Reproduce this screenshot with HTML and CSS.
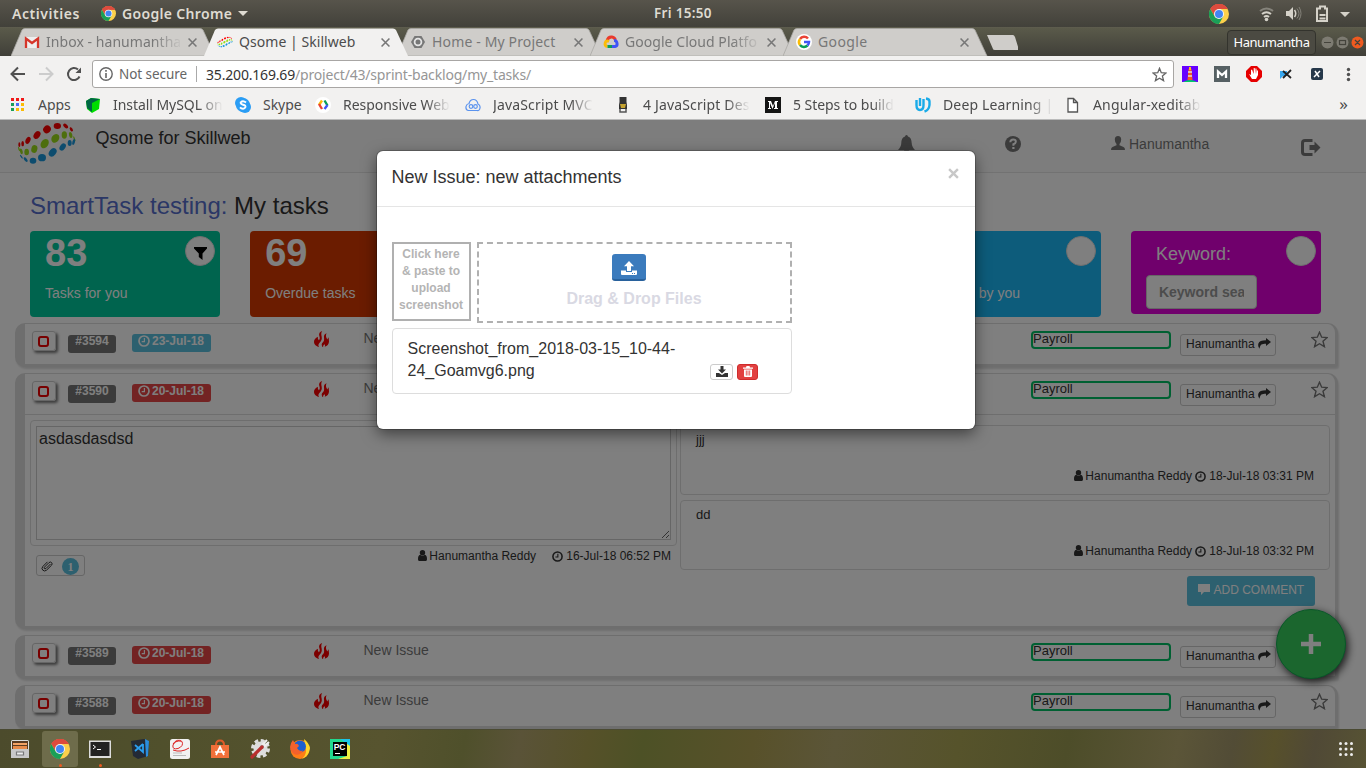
FILE: index.html
```html
<!DOCTYPE html>
<html lang="en">
<head>
<meta charset="utf-8">
<title>Qsome | Skillweb</title>
<link rel="stylesheet" href="styles.css">
</head>
<body>
<svg class="defs" width="0" height="0">
  <symbol id="chrome" viewBox="0 0 20 20">
    <circle cx="10" cy="10" r="10" fill="#fcd04b"/>
    <path d="M10 10 1.3 5A10 10 0 0 1 18.7 5H10z" fill="#dd4b3e"/>
    <path d="M10 5h8.7A10 10 0 0 0 1.3 5L5.7 12.5z" fill="#dd4b3e"/>
    <path d="M1.3 5A10 10 0 0 0 10 20l4.3-7.5L10 10 5.7 12.500z" fill="#1a9f58"/>
    <circle cx="10" cy="10" r="5" fill="#f4f4f4"/><circle cx="10" cy="10" r="4" fill="#4285f4"/>
  </symbol>
  <symbol id="tab" viewBox="0 0 206 28"><path d="M0 28 11 2Q12 .5 14 .5H189Q191 .5 192 2L204 28z"/></symbol>
  <symbol id="close" viewBox="0 0 8 8"><path d="M.5.5l7 7m0-7l-7 7" stroke="#777" stroke-width="1.4"/></symbol>
  <symbol id="logo" viewBox="50 10 180 130">
    <g fill="#f00"><ellipse cx="57" cy="80" rx="3" ry="7"/><ellipse cx="67" cy="77" rx="4" ry="8"/><ellipse cx="83" cy="67" rx="7" ry="11" transform="rotate(25 83 67)"/><ellipse cx="110" cy="51" rx="9" ry="13" transform="rotate(35 110 51)"/><ellipse cx="140" cy="34" rx="11" ry="12" transform="rotate(45 140 34)"/><ellipse cx="171" cy="24" rx="11" ry="9"/><ellipse cx="196" cy="24" rx="9" ry="5" transform="rotate(45 196 24)"/><ellipse cx="213" cy="34" rx="7" ry="4" transform="rotate(60 213 34)"/></g>
    <g fill="#9add1b"><ellipse cx="56" cy="93" rx="2" ry="7" transform="rotate(-20 56 93)"/><ellipse cx="63" cy="100" rx="4" ry="9" transform="rotate(-15 63 100)"/><ellipse cx="79" cy="102" rx="7" ry="10"/><ellipse cx="102" cy="93" rx="9" ry="12" transform="rotate(15 102 93)"/><ellipse cx="133" cy="77" rx="11" ry="15" transform="rotate(35 133 77)"/><ellipse cx="165" cy="61" rx="11" ry="14" transform="rotate(35 165 61)"/><ellipse cx="192" cy="51" rx="8" ry="11"/><ellipse cx="211" cy="51" rx="5" ry="9" transform="rotate(-15 211 51)"/><ellipse cx="222" cy="62" rx="2" ry="8" transform="rotate(-20 222 62)"/></g>
    <g fill="#1b98dd"><ellipse cx="63" cy="116" rx="2" ry="7" transform="rotate(-35 63 116)"/><ellipse cx="76" cy="125" rx="4" ry="8" transform="rotate(-40 76 125)"/><ellipse cx="98" cy="128" rx="10" ry="9"/><ellipse cx="125" cy="119" rx="12" ry="11"/><ellipse cx="157" cy="103" rx="10" ry="14" transform="rotate(40 157 103)"/><ellipse cx="187" cy="87" rx="8" ry="12" transform="rotate(35 187 87)"/><ellipse cx="208" cy="75" rx="6" ry="9"/><ellipse cx="220" cy="72" rx="4" ry="9" transform="rotate(15 220 72)"/></g>
  </symbol>
  <symbol id="flame" viewBox="0 0 15 16"><path d="M8.200 0C5.800.8 4.600 2.600 5.200 4.600 5.900 6.800 6.200 8.300 4.900 9.200 4.100 8.500 3.600 7.500 4 5.800 1.300 6.800 0 8.800 0 10.800c0 2.700 2.400 4.700 5 5.100-.9-1.300-.8-2.600.4-3.900C7.400 9.900 8.300 8.300 7.600 5.300 7.200 3.400 7 1.600 8.200 0z"/><path d="M12.600 2.300C10.300 3.200 9.700 4.600 10 6.600c.3 2.300.1 3.900-1.300 5-1.100.9-1.400 2.300-.4 4.100.3.300.5.300.8.300 0-1.200.5-2.200 1.600-2.700.5.800.5 1.600 0 2.500 2.500-.6 4.300-2.500 4.300-5.200 0-1.900-.4-3.200-.4-4.400-.5.500-1 1.200-1.100 2.200C11.800 6.600 11.500 4.200 12.600 2.300z"/></symbol>
  <symbol id="clock" viewBox="0 0 12 12"><circle cx="6" cy="6" r="5" fill="none" stroke="currentColor" stroke-width="1.700"/><path d="M6.400 3v3.600H3.700" fill="none" stroke="currentColor" stroke-width="1.200"/></symbol>
  <symbol id="user" viewBox="0 0 9 11"><circle cx="4.500" cy="2.700" r="2.700"/><path d="M2.200 4.700C.5 5 0 6.700 0 9.200 0 10.500.8 11 1.800 11h5.400C8.200 11 9 10.500 9 9.200 9 6.700 8.500 5 6.800 4.700a3.300 3.300 0 0 1-4.600 0z"/></symbol>
  <symbol id="share" viewBox="0 0 13 11"><path d="M8 0l5 4-5 4V5.700C4 5.700 2 6.300 1.600 10.800 0 9 0 6.900.4 5.600 1.200 3.200 3.600 2.300 8 2.300z"/></symbol>
  <symbol id="star" viewBox="0 0 17 17"><path d="M8.500 1.200l2.200 5 5.500.4-4.200 3.600 1.400 5.500-4.900-3-4.900 3L5 10.200.8 6.600l5.500-.4z" fill="none" stroke="#777" stroke-width="1.400"/></symbol>
</svg>

<header class="topbar">
  <span class="activities">Activities</span>
  <svg class="i15"><use href="#chrome"/></svg>
  <span class="appname">Google Chrome</span><i class="caret"></i>
  <span class="clock">Fri 15:50</span>
  <svg class="i20 tray-chrome"><use href="#chrome"/></svg>
  <svg class="tray" width="92" height="18" viewBox="0 0 92 18" fill="none" stroke="#d5d2c9">
    <path d="M1 6q6.500-5 13 0" stroke="#85837b" stroke-width="2"/><path d="M3 9q4.500-3.500 9 0M5 12q2.500-2 5 0" stroke-width="2"/><circle cx="7.500" cy="14.500" r="1.800" fill="#d5d2c9" stroke="none"/>
    <path d="M27 6h3l4-4v13l-4-4h-3z" fill="#d5d2c9" stroke="none"/><path d="M35.500 5q2.500 3.500 0 7" stroke-width="1.500"/><path d="M38 3.500q4 5 0 10M40 2q4 6.500 0 13" stroke="#85837b"/>
    <path d="M59 3.500h2v-2h5v2h2V16h-10V3.500zM60.500 13.500h6M60.500 10h6" stroke-width="2"/>
    <path d="M81 7h10l-5 5z" fill="#d5d2c9" stroke="none"/>
  </svg>
</header>

<nav class="tabstrip">
  <div class="tab"><svg class="shape"><use href="#tab"/></svg>
    <svg class="fav" viewBox="0 0 16 16"><path d="M1 3h14v11H1z" fill="#eee"/><path d="M2 14V4.500L8 9l6-4.500V14" fill="none" stroke="#d5362b" stroke-width="2.300"/></svg>
    <span class="ttl faded">Inbox - hanumantha</span><svg class="x"><use href="#close"/></svg></div>
  <div class="tab active"><svg class="shape"><use href="#tab"/></svg>
    <svg class="fav" viewBox="50 10 180 130"><use href="#logo" x="50" y="10" width="180" height="130"/></svg>
    <span class="ttl t-q">Qsome | Skillweb</span><svg class="x"><use href="#close"/></svg></div>
  <div class="tab"><svg class="shape"><use href="#tab"/></svg>
    <svg class="fav" viewBox="0 0 16 16"><path d="M4.500 2h7L15 8l-3.500 6h-7L1 8z" fill="#777"/><circle cx="8" cy="8" r="3.400" fill="#777" stroke="#e4e4e4" stroke-width="1.800"/></svg>
    <span class="ttl t-h">Home - My Project</span><svg class="x"><use href="#close"/></svg></div>
  <div class="tab"><svg class="shape"><use href="#tab"/></svg>
    <svg class="fav" viewBox="0 0 16 16" fill="none" stroke-width="3"><path d="M4 7q1-4.500 5-4 2.500.3 3.500 3" stroke="#ea3a2d"/><path d="M4.500 12.500Q1.500 12 2.200 9T6 7.500" stroke="#fbbc05"/><path d="M4.500 12.500H9" stroke="#0a9d58"/><path d="M9 12.500h3q2.500-.5 2-3.300T11 6.500" stroke="#4055f5"/></svg>
    <span class="ttl faded t-c">Google Cloud Platfo</span><svg class="x"><use href="#close"/></svg></div>
  <div class="tab"><svg class="shape"><use href="#tab"/></svg>
    <svg class="fav" viewBox="0 0 16 16" fill="none" stroke-width="2.500"><circle cx="8" cy="8" r="8" fill="#fff"/><path d="M12 4.500A5 5 0 0 0 4 5" stroke="#ea4335"/><path d="M4 5a5 5 0 0 0 0 6" stroke="#fbbc05"/><path d="M4 11a5 5 0 0 0 7.500.5" stroke="#0a9d58"/><path d="M11.500 11.500A5 5 0 0 0 13 8H8" stroke="#4055f5"/></svg>
    <span class="ttl t-g">Google</span><svg class="x"><use href="#close"/></svg></div>
  <svg class="newtab" width="32" height="15"><path d="M1 0h26q1 0 2 2l4 13H9q-2 0-2-1z" fill="#cfcdca"/></svg>
  <span class="profile">Hanumantha</span>
  <svg class="winbtns" width="43" height="13" viewBox="0 0 43 13"><circle cx="6.500" cy="6.500" r="6" fill="#7d7b72"/><circle cx="21.500" cy="6.500" r="6" fill="#7d7b72"/><circle cx="36.500" cy="6.500" r="6" fill="#ee5a20"/><g stroke="#44433c" fill="none" stroke-width="1.200"><path d="M3 6.500h7M34 4l5 5m0-5l-5 5"/><rect x="18.500" y="4.500" width="6" height="4"/></g></svg>
</nav>

<div class="toolbar">
  <svg width="72" height="16" viewBox="0 0 72 16" fill="none" stroke="#505050" stroke-width="2"><path d="M15 8H2M8 1.500L1.500 8 8 14.500"/><path d="M29 8h12.500M36 1.500L42.500 8 36 14.500" stroke="#ccc"/><path d="M69.500 10.500A6 6 0 1 1 68 3.600"/><path d="M65.500 7H71V1.500z" fill="#505050" stroke="none"/></svg>
  <div class="omnibox">
    <svg width="14" height="14" viewBox="0 0 14 14"><circle cx="7" cy="7" r="6.200" fill="none" stroke="#666" stroke-width="1.400"/><path d="M7 6v5M7 3v1.700" stroke="#666" stroke-width="1.600"/></svg>
    <span class="notsec">Not secure</span><span class="url"><b>35.200.169.69</b>/project/43/sprint-backlog/my_tasks/</span>
    <svg class="bm" width="15" height="15" viewBox="0 0 17 17"><path d="M8.500 1.500l2 4.900 5.400.4-4.100 3.500 1.300 5.200-4.600-2.800-4.600 2.800 1.300-5.200L1.100 6.800l5.400-.4z" fill="none" stroke="#666" stroke-width="1.500"/></svg>
  </div>
  <svg class="exts" width="172" height="16" viewBox="0 0 172 16">
    <path d="M0 0h16v16H0z" fill="#60f"/><path d="M6.500 3h3l1 11h-5z" fill="#f55522"/><path d="M6 6h4M6 10h4" stroke="#ddd" stroke-width="1.500"/><path d="M7 1h2v3H7z" fill="#fb2"/><path d="M1 16q7-4 14 0z" fill="#0c6"/>
    <path d="M32 0h16v16H32z" fill="#566063"/><path d="M36 12V5.500l4 3.500 4-3.500V12" stroke="#fff" stroke-width="2.300" fill="none"/>
    <path d="M69 0h6l5 5v6l-5 5h-6l-5-5V5z" fill="#e60000"/><path d="M69 4v5l-2-1 3 5h4l2-4V4.500h-1V8l-.6-5.500h-1V8l-.7-6h-1v6L70 3.500z" fill="#fff"/>
    <path d="M98 5h7v5h-4l-3 3z" fill="#38a8f0"/><path d="M101 5l8 7m-8 0l8-8" stroke="#222" stroke-width="1.800"/>
    <rect x="129" y="2" width="12" height="12" rx="2" fill="#26384a"/><path d="M133 5l4 6m1-6l-6 6" stroke="#fff" stroke-width="1.500"/>
    <g fill="#505050"><circle cx="166.500" cy="3.500" r="1.700"/><circle cx="166.500" cy="8.500" r="1.700"/><circle cx="166.500" cy="13.500" r="1.700"/></g>
  </svg>
</div>

<div class="bookmarks">
  <div class="bk" style="width:75px"><svg viewBox="0 0 16 16"><path d="M1 1h3v3H1zm5 0h3v3H6zm5 0h3v3h-3z" fill="#f01818"/><path d="M1 6h3v3H1z" fill="#1a9f58"/><path d="M6 6h3v3H6z" fill="#4c6cf5"/><path d="M11 6h3v3h-3zM6 11h3v3H6zm5 0h3v3h-3z" fill="#fbbc05"/><path d="M1 11h3v3H1z" fill="#1a9f58"/></svg><span>Apps</span></div>
  <div class="bk" style="width:150px"><svg viewBox="0 0 16 16"><path d="M1 4l5-3 9 1-1 10-7 4-5-4z" fill="#00de00"/><path d="M1 4l5-3 9 1-8 4zM1 4l6 2v9l-5-4z" fill="#064"/></svg><span class="faded">Install MySQL on</span></div>
  <div class="bk" style="width:80px"><svg viewBox="0 0 16 16"><rect width="12" height="12" rx="6" fill="#2b9df4"/><rect x="4" y="4" width="12" height="12" rx="6" fill="#2b9df4"/><circle cx="8" cy="8" r="7" fill="#2b9df4"/><path d="M11 5.500Q8 3 5.700 5.300C5 8.500 11 7 10.500 10 9.500 12.500 6.500 12 5 10.300" fill="none" stroke="#fff" stroke-width="1.900"/></svg><span>Skype</span></div>
  <div class="bk" style="width:150px"><svg viewBox="0 0 16 16" fill="none" stroke-width="2.400"><circle cx="8" cy="8" r="8" fill="#fff"/><path d="M7 3.500L4 8" stroke="#fbbc05"/><path d="M4 7l3 5" stroke="#ea4335"/><path d="M9.500 3.500l3 5" stroke="#0a9d58"/><path d="M12.500 8l-3 4" stroke="#4055f5"/></svg><span class="faded">Responsive Web</span></div>
  <div class="bk" style="width:150px"><svg viewBox="0 0 16 16" fill="none" stroke="#5b93ee" stroke-width="1.200"><path d="M3.500 13.500Q.5 13 1 9.500 1.500 7 4 6.500 5 2.500 8.500 2.500t4.500 4.500Q15.500 8 15 11t-3 2.500z"/><circle cx="6" cy="9.500" r="1.800"/><circle cx="10.500" cy="9.500" r="1.800"/></svg><span class="faded wide">JavaScript MVC</span></div>
  <div class="bk" style="width:150px"><svg viewBox="0 0 16 16"><path d="M4.500 0h7v5l.5 3v4H4V8l.5-3z" fill="#333"/><path d="M5 7h6l-1 4H6z" fill="#c4a230"/><path d="M5 12v3h6v-3" fill="none" stroke="#555" stroke-width="1.500"/></svg><span class="faded wide">4 JavaScript Des</span></div>
  <div class="bk" style="width:150px"><svg viewBox="0 0 16 16"><path d="M0 0h16v16H0z" fill="#151515"/><path d="M3 4h3l2 5 2-5h3v1h-1v6h1v1H9v-1h1V6l-2.500 6L5 6v5h1v1H3v-1h1V5H3z" fill="#fff"/></svg><span class="faded">5 Steps to build</span></div>
  <div class="bk" style="width:150px"><svg viewBox="0 0 16 16" fill="none" stroke="#1aabe8" stroke-width="2.400"><path d="M1.500 3v5q0 5 3.500 5t3.500-5V2"/><path d="M11 1.500q3.500.5 3.500 3V8q-.5 5-5 6.500"/><path d="M5 1v8"/></svg><span class="faded wide">Deep Learning |</span></div>
  <div class="bk bk-last"><svg viewBox="0 0 16 16"><path d="M3 1.500h5.500l4 4V15H3zM8.500 1.500v4h4" fill="#fff" stroke="#555" stroke-width="1.300"/></svg><span class="faded wide">Angular-xeditab</span></div>
  <span class="more">»</span>
</div>

<main class="page">
  <div class="navbar">
    <svg class="logo"><use href="#logo"/></svg>
    <span class="brand">Qsome for Skillweb</span>
    <svg class="bell" width="17" height="18" viewBox="0 0 17 18"><path d="M8.500 0q1.300 0 1.500 1.500C13 2.500 13.500 5 13.700 8c.1 3 1.300 4.800 3.300 7H0c2-2.200 3.200-4 3.300-7C3.500 5 4 2.500 7 1.500 7.200 0 8.500 0 8.500 0zM6 15.500h5q-.5 2.500-2.500 2.500T6 15.500z"/></svg>
    <svg class="help" width="16" height="16" viewBox="0 0 16 16"><circle cx="8" cy="8" r="8"/><path d="M5.300 6.200Q5.500 3.500 8.200 3.500t2.600 2.300Q10.500 7.500 8.400 8.200V9.700" fill="none" stroke="#fff" stroke-width="2"/><path d="M7.300 11h2.200v2H7.300z" fill="#fff"/></svg>
    <svg class="person" width="14" height="14" viewBox="0 0 14 14"><path d="M7 0q3.200 0 3.200 3.500 0 3-1.700 4.500v1.200Q10 10 12.500 11q1.500.6 1.500 3H0q0-2.400 1.500-3Q4 10 5.500 9.200V8Q3.800 6.500 3.800 3.500 3.800 0 7 0z"/></svg>
    <span class="username">Hanumantha</span>
    <svg class="exit" width="20" height="17" viewBox="0 0 20 17"><path d="M11.500 1.500H4Q1.500 1.500 1.500 4v9q0 2.500 2.500 2.500h7.500" fill="none" stroke="#777" stroke-width="3"/><path d="M8.500 6h5V2.500l6 6-6 6V11h-5z"/></svg>
  </div>
  <h1 class="heading"><span>SmartTask testing:</span> My tasks</h1>
  <div class="cards">
    <div class="card c1"><b>83</b><span>Tasks for you</span><i class="dot"><svg width="13" height="13" viewBox="0 0 13 13"><path d="M0 0h13v1.500L8.500 6.500V13L4.800 10V6.500L0 1.500z"/></svg></i></div>
    <div class="card c2"><b>69</b><span>Overdue tasks</span></div>
    <div class="card c3"></div>
    <div class="card c4"></div>
    <div class="card c5"><span>by you</span><i class="dot"></i></div>
    <div class="card c6"><label>Keyword:</label><input placeholder="Keyword search"><i class="dot"></i></div>
  </div>
  <section class="rows">
    <article class="row"><div class="line">
      <i class="check"></i><span class="tag">#3594</span><span class="tag date info"><svg><use href="#clock"/></svg>23-Jul-18</span><svg class="flame"><use href="#flame"/></svg><span class="name">Ne</span><span class="epic">Payroll</span><span class="who">Hanumantha <svg><use href="#share"/></svg></span><svg class="star"><use href="#star"/></svg>
    </div></article>
    <article class="row open"><div class="line">
      <i class="check"></i><span class="tag">#3590</span><span class="tag date"><svg><use href="#clock"/></svg>20-Jul-18</span><svg class="flame"><use href="#flame"/></svg><span class="name">Ne</span><span class="epic">Payroll</span><span class="who">Hanumantha <svg><use href="#share"/></svg></span><svg class="star"><use href="#star"/></svg>
    </div>
    <div class="detail">
      <div class="desc">
        <div class="editor"><textarea>asdasdasdsd</textarea></div>
        <div class="descfoot">
          <span class="attach"><svg width="12" height="12" viewBox="0 0 12 12" fill="none" stroke="#333" stroke-width="1"><path d="M9.500 4L5 8.500Q3.800 9.200 3.300 8.500T3.600 7L8 2.600q1.500-1.200 2.600 0t0 2.600L5.500 10.200q-2 1.600-3.700 0t0-3.700L6.500 1.800"/></svg><i>1</i></span>
          <span class="meta"><svg class="u"><use href="#user"/></svg> Hanumantha Reddy <svg class="k gap"><use href="#clock"/></svg> 16-Jul-18 06:52 PM</span>
        </div>
      </div>
      <div class="comments">
        <div class="comment"><p>jjj</p><span class="meta"><svg class="u"><use href="#user"/></svg> Hanumantha Reddy <svg class="k"><use href="#clock"/></svg> 18-Jul-18 03:31 PM</span></div>
        <div class="comment"><p>dd</p><span class="meta"><svg class="u"><use href="#user"/></svg> Hanumantha Reddy <svg class="k"><use href="#clock"/></svg> 18-Jul-18 03:32 PM</span></div>
        <span class="addc"><svg width="12" height="11" viewBox="0 0 12 11"><path d="M0 0h12v8H6l-3 3V8H0z"/></svg>ADD COMMENT</span>
      </div>
    </div></article>
    <article class="row"><div class="line">
      <i class="check"></i><span class="tag">#3589</span><span class="tag date"><svg><use href="#clock"/></svg>20-Jul-18</span><svg class="flame"><use href="#flame"/></svg><span class="name">New Issue</span><span class="epic">Payroll</span><span class="who">Hanumantha <svg><use href="#share"/></svg></span>
    </div></article>
    <article class="row"><div class="line">
      <i class="check"></i><span class="tag">#3588</span><span class="tag date"><svg><use href="#clock"/></svg>20-Jul-18</span><svg class="flame"><use href="#flame"/></svg><span class="name">New Issue</span><span class="epic">Payroll</span><span class="who">Hanumantha <svg><use href="#share"/></svg></span><svg class="star"><use href="#star"/></svg>
    </div></article>
  </section>
  <div class="fab"><svg width="20" height="20" viewBox="0 0 20 20"><path d="M10 1.500v17M1.500 10h17" stroke="#fff" stroke-width="4.500" stroke-linecap="square" stroke-dasharray="17"/></svg></div>
  <div class="backdrop"></div>
  <div class="modal">
    <div class="mhead"><span>New Issue: new attachments</span><svg width="11" height="11" viewBox="0 0 10 10"><path d="M1 1l8 8m0-8L1 9" stroke="#c8c8c8" stroke-width="2.200"/></svg></div>
    <div class="mbody">
      <div class="drops">
        <div class="paste">Click here<br>&amp; paste to<br>upload<br>screenshot</div>
        <div class="drop">
          <span class="up"><svg width="16" height="15" viewBox="0 0 16 15"><path d="M8 0l5 5.200h-3V10H6V5.200H3zM0 9.500h5V11h6V9.500h5V13q0 1-1 1H1q-1 0-1-1z" fill="#fff"/><path d="M11 12.500h1m1 0h1" stroke="#3b7bbd"/></svg></span>
          <b>Drag &amp; Drop Files</b>
        </div>
      </div>
      <div class="file">
        <span>Screenshot_from_2018-03-15_10-44-<br>24_Goamvg6.png</span>
        <i class="dl"><svg width="12" height="11" viewBox="0 0 12 11"><path d="M4.500 0h3v3.500H10L6 7.500l-4-4h2.500zM0 7h3l3 2 3-2h3v4H0z" fill="#333"/></svg></i>
        <i class="del"><svg width="10" height="11" viewBox="0 0 10 11"><path d="M0 1.500h3L3.500 0h3L7 1.500h3v1.300H0zM1 3.500h8V10q0 1-1 1H2q-1 0-1-1z" fill="#fff"/><path d="M3.300 4.500v5M5 4.500v5m1.700-5v5" stroke="#e03a3a" stroke-width=".8"/></svg></i>
      </div>
    </div>
  </div>
</main>

<footer class="dock">
  <div class="app"><svg viewBox="0 0 20 20"><rect x="1" y="1" width="18" height="18" rx="1.500" fill="#ddd"/><path d="M2 2h16v8H2z" fill="#5a3a22"/><path d="M3 4h14v2H3z" fill="#f4a264"/><path d="M3 7h14v3H3z" fill="#e88a4a"/><path d="M1 10h18v9H1z" fill="#c8c8c8"/><path d="M6.500 13v3h7v-3z" fill="#eee" stroke="#777" stroke-width="1.200"/></svg></div>
  <div class="app on run"><svg><use href="#chrome"/></svg></div>
  <div class="app run"><svg class="term" viewBox="0 0 22 20"><rect y="1.500" width="22" height="17.500" fill="#ddd"/><rect x="1.500" y="3" width="19" height="14" fill="#222"/><path d="M4 6l2.500 2L4 10M8 10.500h4" fill="none" stroke="#fff"/></svg></div>
  <div class="app"><svg viewBox="0 0 20 20"><path d="M1 2l13-2 5 2-1 15-10 3-5-3z" fill="#232a36"/><path d="M15 0l4 2-1 15-2 1z" fill="#2b8ddd"/><path d="M13 5L5 12M5 6l8 7V5" fill="none" stroke="#2b9ff0" stroke-width="1.800"/></svg></div>
  <div class="app"><svg viewBox="0 0 20 20"><rect x="0" width="20" height="20" rx="2.500" fill="#f2f2f2"/><path d="M3 5Q7-1 12 2.500 14 7 8 9.500 2 11 3 6 5 1.500 11 2M3 11q8 3 16-2" fill="none" stroke="#d22" stroke-width="1"/><path d="M3 14h9M3 16.500h13" stroke="#bbb"/></svg></div>
  <div class="app"><svg viewBox="0 0 20 20"><path d="M1 6h18v13H1z" fill="#f2703a"/><path d="M6 6q0-4.500 4-4.500T14 6" fill="none" stroke="#e05a28" stroke-width="2"/><path d="M6 16l4-8 4 8M5 13h10" fill="none" stroke="#fff" stroke-width="1.700"/></svg></div>
  <div class="app"><svg viewBox="0 0 20 20"><circle cx="10.500" cy="9.500" r="8" fill="none" stroke="#ddd" stroke-width="3" stroke-dasharray="3.800 2.480"/><circle cx="10.500" cy="9.500" r="7" fill="#ddd"/><path d="M17 1l-4 4 2 2 4-4" fill="none" stroke="#eee" stroke-width="2"/><circle cx="12" cy="8" r="2" fill="#999"/><path d="M2 18L12 8" stroke="#b92f2f" stroke-width="3.200" stroke-linecap="round"/></svg></div>
  <div class="app"><svg viewBox="0 0 20 20"><circle cx="10" cy="10.500" r="9.500" fill="#ff7d16"/><path d="M14 0q5 4 6 9-1 8-8 11 6-5 3-13z" fill="#ffd52b"/><circle cx="10" cy="7.500" r="6" fill="#1d5fd0"/><path d="M0 8Q1 3 3 1l2 4q3-1 4 2l-2 2q2 4 6 2.500-2 5-8 4Q1 14 0 8z" fill="#f4612c"/></svg></div>
  <div class="app"><svg viewBox="0 0 20 20"><path d="M0 0h20v20H0z" fill="#22d88f"/><path d="M17 3l3 3v14H8l9-3z" fill="#f0f040"/><path d="M10 0h10v7z" fill="#1bc5e8"/><path d="M3 3h14v14H3z" fill="#000"/><text x="3.700" y="10.500" class="pc">PC</text><path d="M5 14.500h5" stroke="#fff"/></svg></div>
  <svg class="grid" width="16" height="16" viewBox="0 0 16 16" fill="#eee"><circle cx="2.500" cy="2.500" r="1.500"/><circle cx="8" cy="2.500" r="1.500"/><circle cx="13.500" cy="2.500" r="1.500"/><circle cx="2.500" cy="8" r="1.500"/><circle cx="8" cy="8" r="1.500"/><circle cx="13.500" cy="8" r="1.500"/><circle cx="2.500" cy="13.500" r="1.500"/><circle cx="8" cy="13.500" r="1.500"/><circle cx="13.500" cy="13.500" r="1.500"/></svg>
</footer>
</body>
</html>
```
FILE: styles.css
```css
*, *::before, *::after { box-sizing: border-box; }
body { margin: 0; width: 1366px; height: 768px; overflow: hidden; display: flex; flex-direction: column; font-family: "Liberation Sans", Arial, sans-serif; font-size: 14px; color: #333; }
svg { flex: none; }
i { font-style: normal; }
.defs { position: absolute; }

/* desktop bar */
.topbar, .tabstrip, .toolbar, .bookmarks { font-family: "Noto Sans", sans-serif; white-space: nowrap; }
.topbar { height: 27px; flex: none; display: flex; align-items: center; padding-left: 12px; background: linear-gradient(#57544b, #42413a); color: #dfdbd2; font-weight: 600; font-size: 14px; line-height: 27px; }
.activities { width: 89px; letter-spacing: .55px; }
.i15 { width: 15px; height: 15px; }
.appname { margin-left: 6px; width: 111px; letter-spacing: .33px; }
.caret { border: 5px solid transparent; border-top-color: #dfdbd2; border-bottom: 0; margin-left: 5px; }
.clock { margin-left: 406px; width: 59px; font-size: 13.500px; letter-spacing: .3px; }
.i20 { width: 20px; height: 20px; }
.tray-chrome { margin-left: 496px; }
.tray { margin-left: 30px; }

/* tabs */
.tabstrip { height: 29px; flex: none; display: flex; align-items: center; padding-left: 11px; background: linear-gradient(#5a5a4a, #403f39); border-top: 1px solid #5d5c4d; }
.tab { position: relative; width: 193px; height: 28px; flex: none; display: flex; align-items: center; padding-left: 13px; color: #777; }
.shape { position: absolute; left: 0; top: 0; width: 206px; height: 28px; fill: #cfcdca; stroke: #aaa8a4; stroke-width: .8; z-index: 0; }
.active { z-index: 2; color: #4c4c4c; }
.active .shape { fill: #f2f1f0; stroke: none; }
.fav { width: 16px; height: 16px; position: relative; }
.ttl { position: relative; margin-left: 6px; width: 137px; overflow: hidden; font-size: 14px; line-height: 24px; letter-spacing: .05px; }
.t-h { letter-spacing: .15px; }
.t-g { letter-spacing: .4px; }
.faded { -webkit-mask-image: linear-gradient(90deg, #000 78%, transparent 100%); mask-image: linear-gradient(90deg, #000 78%, transparent 100%); }
.x { position: relative; width: 9px; height: 9px; margin-left: 5px; }
.newtab { margin-left: 10px; }
.profile { margin-left: 209px; width: 89px; height: 25px; border: 1px solid #33332d; border-radius: 4px; background: #4b4a42; color: #fff; font-size: 13px; line-height: 23px; text-align: center; letter-spacing: -.45px; }
.winbtns { margin-left: 5px; }

/* toolbar */
.toolbar { height: 34px; flex: none; display: flex; align-items: center; padding: 2px 0 0 10px; background: #f2f1f0; }
.omnibox { margin-left: 10px; width: 1082px; height: 28px; display: flex; align-items: center; padding-left: 6px; border: 1px solid #a8a6a4; border-radius: 3px; background: #fff; color: #666; font-size: 14px; }
.notsec { margin-left: 6px; width: 78px; height: 16px; line-height: 16px; border-right: 1px solid #aaa; font-size: 13.500px; letter-spacing: -.05px; }
.url { margin-left: 9px; color: #969696; letter-spacing: -.18px; }
.url b { font-weight: 400; color: #333; }
.bm { margin-left: auto; margin-right: 6px; }
.exts { margin-left: 8px; }
.bookmarks { height: 30px; flex: none; display: flex; align-items: center; padding-left: 10px; background: #f2f1f0; border-bottom: 1px solid #bbb; color: #4c4c4c; }
.bk { display: flex; align-items: center; flex: none; }
.bk svg { width: 16px; height: 16px; }
.bk span { margin-left: 12px; overflow: hidden; max-width: 110px; font-size: 14px; line-height: 22px; letter-spacing: -.05px; }
.bk .wide { letter-spacing: .15px; }
.bk-last { width: 274px; }
.more { margin-left: auto; padding: 0 18px 2px 0; font-size: 17px; line-height: 20px; }

/* page */
.page { position: relative; flex: none; height: 609px; overflow: hidden; background: #fff; }
.navbar { display: flex; height: 53px; align-items: flex-start; padding-left: 17px; border-bottom: 1px solid #e4e4e4; background: #fbfbfb; fill: #777; }
.logo { width: 60px; height: 44px; margin-top: 1px; }
.brand { margin: 8px 0 0 18.500px; width: 160px; font-size: 18px; line-height: 20px; white-space: nowrap; }
.bell { margin: 15px 0 0 642.500px; }
.help { margin: 16px 0 0 90px; }
.person { margin: 16px 0 0 90px; }
.username { margin: 14px 0 0 4px; width: 81px; line-height: 20px; color: #777; }
.exit { margin: 19px 0 0 91px; }
.heading { margin: 19px 0 0 30px; height: 28px; font-size: 24px; line-height: 28px; font-weight: 400; }
.heading span { color: #566ecc; }
.cards { display: grid; grid-template-columns: repeat(6, 190px); column-gap: 30.200px; margin: 11px 0 0 30px; align-items: start; height: 92px; }
.card { position: relative; height: 86px; border-radius: 4px; padding: 0 15px; color: #fff; display: flex; flex-direction: column; }
.card b { font-size: 38px; line-height: 44px; height: 52px; }
.card span { line-height: 20px; }
.c1 { background: #00c89d; }
.c2, .c3 { background: #d63800; }
.c4, .c5 { background: #1ab8f6; }
.c5 { padding: 52px 0 0 68px; }
.c6 { background: #e000d8; height: 83px; }
.c6 label { padding: 13px 0 0 10px; font-size: 18px; line-height: 20px; height: 44px; }
.c6 input { width: 111px; height: 34px; padding: 6px 12px; border: 1px solid #ccc; border-radius: 4px; font: bold 14px "Liberation Sans", Arial, sans-serif; background: #fff; }
.c6 input::placeholder { color: #999; }
.dot { position: absolute; right: 5px; top: 5px; width: 30px; height: 30px; border-radius: 50%; background: #fff; border: 1px solid #ddd; display: flex; align-items: center; justify-content: center; padding-top: 4px; }

.rows { margin-left: 15px; display: flex; flex-direction: column; gap: 6px; }
.row { width: 1323px; height: 44px; flex: none; border: solid #dcdcdc; border-width: 1px 3px 3px 10px; border-radius: 10px 10px 3px 10px; box-shadow: 1px 2px 2px #e0e0e0; background: #fff; }
.row.open { height: 256px; }
.line { display: grid; grid-template-columns: 36px 64px 182px 49px 668px 149px 131px 20px; align-items: start; padding: 7px 0 0 7px; height: 40px; }
.check { width: 24px; height: 20px; border: 1px solid #ccc; border-radius: 3px; box-shadow: 2px 2px 3px #777; padding: 4px 0 0 5px; }
.check::before { content: ""; display: block; width: 11px; height: 11px; border: 2px solid #f00000; border-radius: 3px; }
.tag { margin-top: 4px; width: 48px; height: 18px; border-radius: 3px; background: #777; color: #fff; font-weight: 700; font-size: 12px; line-height: 13px; text-align: center; }
.date { margin-top: 3px; width: 79px; background: #e64646; display: flex; padding-left: 6px; line-height: 14px; }
.date svg { width: 12px; height: 12px; margin: 1px 2px 0 0; }
.info { background: #5bc0de; }
.flame { width: 15px; height: 16px; fill: #f80000; }
.name { line-height: 20px; margin: -3px 0 0 .5px; color: #777; }
.epic { width: 140px; height: 18px; border: 2px solid #00c064; border-radius: 4px; font-size: 13px; line-height: 12px; }
.who { margin-top: 3px; width: 96px; height: 22px; border: 1px solid #ccc; border-radius: 3px; padding-left: 5px; font-size: 12px; line-height: 18px; white-space: nowrap; }
.who svg { width: 13px; height: 11px; vertical-align: -1px; fill: #333; }
.star { width: 17px; height: 17px; }
.detail { display: flex; border-top: 1px solid #ddd; padding: 5px 5px 0; height: 212px; }
.desc { width: 647px; }
.editor { height: 126px; border: 1px solid #ddd; border-radius: 4px; padding: 5px; }
.editor textarea { display: block; width: 635px; height: 114px; padding: 2px; border: 1px solid #ccc; font: 16px/20px "Liberation Sans", Arial, sans-serif; color: #333; background: #fff; resize: both; }
.descfoot { display: flex; justify-content: space-between; padding: 0 6px; }
.attach { width: 49px; height: 21px; margin-top: 9px; border: 1px solid #ccc; border-radius: 3px; display: flex; align-items: center; padding: 1px 0 0 4px; }
.attach i { width: 17px; height: 17px; margin-left: 9px; border-radius: 50%; background: #5bc0de; color: #fff; font: bold 12px/18px "Liberation Serif", serif; text-align: center; }
.meta { font-size: 12px; line-height: 20px; white-space: pre; }
.u { width: 9px; height: 11px; vertical-align: -1px; margin-right: -.5px; fill: #333; }
.k { width: 11px; height: 11px; vertical-align: -1.500px; margin-right: -.5px; }
.gap { margin-left: 13px; }
.comments { margin: 5px 0 0 3px; width: 650px; display: flex; flex-direction: column; gap: 5px; }
.comment { height: 70px; flex: none; border: 1px solid #ddd; border-radius: 4px; padding: 4px 15px 0; font-size: 13px; display: flex; flex-direction: column; }
.comment p { margin: 0; height: 36px; line-height: 20px; }
.comment .meta { align-self: flex-end; }
.addc { align-self: flex-end; flex: none; margin: 1px 15px 0 0; width: 128px; height: 30px; border-radius: 3px; background: #5bc0de; color: #fff; fill: #fff; font-size: 12px; line-height: 28px; padding-left: 11px; white-space: nowrap; }
.addc svg { margin-right: 3.500px; vertical-align: -1px; }
.fab { position: absolute; left: 1276px; top: 489px; width: 70px; height: 70px; border-radius: 50%; border: 1px solid #10b050; background: #36cc5c; box-shadow: 2px 3px 8px #333; display: flex; align-items: center; justify-content: center; }
.backdrop { position: absolute; inset: 0; background: rgba(0,0,0,.5); }

/* modal */
.modal { position: absolute; left: 377px; top: 31px; width: 598px; height: 278px; background: #fff; border-radius: 6px; box-shadow: 0 0 0 1px rgba(0,0,0,.2), 0 5px 15px rgba(0,0,0,.5); }
.mhead { height: 56px; border-bottom: 1px solid #e5e5e5; padding: 13px 16px 0 14.500px; display: flex; justify-content: space-between; font-size: 18px; line-height: 26px; }
.mhead svg { margin-top: 4px; }
.mbody { padding: 35px 15px 0; }
.drops { display: flex; gap: 6px; align-items: flex-start; }
.paste { width: 79px; height: 79px; border: 2px solid #b0b0b0; color: #b4b4b4; font-weight: 700; font-size: 12px; line-height: 17px; text-align: center; padding: 2px 1px 0 0; }
.drop { width: 315px; height: 81px; border: 2px dashed #b0b0b0; display: flex; flex-direction: column; align-items: center; padding-top: 10px; color: #d9d9e3; font-size: 16px; }
.up { width: 34px; height: 27px; margin-right: 11px; border-radius: 3px; background: #3b7bbd; border-bottom: 2px solid #28619c; padding: 7px 0 0 9px; }
.up svg { display: block; }
.drop b { line-height: 20px; margin: 8px 1px 0 0; }
.file { width: 400px; height: 66px; margin-top: 5px; border: 1px solid #ddd; border-radius: 4px; padding: 9px 0 0 14.500px; display: flex; font-size: 16px; line-height: 22px; }
.file span { width: 302.500px; }
.file i { height: 16px; margin-top: 26px; border: 1px solid #ccc; border-radius: 3px; display: flex; justify-content: center; padding-top: 1px; }
.dl { width: 23px; }
.file .del { width: 21px; margin-left: 4px; background: #e24040; border-color: #cf2c2c; }

/* dock */
.dock { height: 39px; flex: none; display: flex; align-items: center; padding-left: 2px; background: linear-gradient(100deg, #4c4b2c 0, #50502c 12%, #57542f 28%, #4f502b 34%, #5a5338 38%, #565129 43%, #4d5126 47%, #58512a 55%, #5b5538 61%, #56532b 70%, #4d4d29 78%, #5b5538 86%, #524c36 90%, #57502b 93%, #504936 96%, #575333 100%); border-top: 1px solid #4a4a32; }
.app { position: relative; width: 36px; height: 36px; margin-right: 4px; flex: none; display: flex; align-items: center; justify-content: center; border-radius: 3px; }
.app svg { width: 20px; height: 20px; }
.app .term { width: 22px; }
.on { background: #6e6c4b; }
.run::after { content: ""; position: absolute; left: 17px; bottom: 0; width: 3px; height: 3px; border-radius: 50%; background: #f05a20; }
.pc { font: bold 8.500px "Liberation Sans", sans-serif; fill: #fff; }
.grid { margin-left: 976px; }
```
